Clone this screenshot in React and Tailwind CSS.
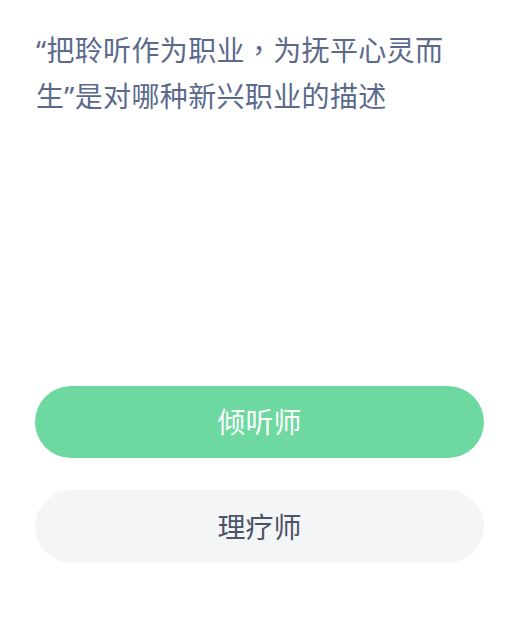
export default function App() {
  return (
    <div
      className="w-[524px] h-[618px] bg-white overflow-hidden"
      style={{ fontFamily: '"Noto Sans", "Noto Sans CJK SC", sans-serif' }}
    >
      {/* Question */}
      <p className="pt-[26px] pl-9 w-[462px] text-[28px] tracking-[0.35px] leading-[46px] text-[#5b6a8c]">
        “把聆听作为职业
        <span style={{ fontFamily: '"Noto Sans CJK TC", sans-serif' }}>，</span>
        为抚平心灵而生”是对哪种新兴职业的描述
      </p>

      {/* Options */}
      <div className="mt-[267px] ml-[35px] w-[449px] flex flex-col gap-8">
        <button className="h-[72px] rounded-full bg-[#6dd89f] text-white text-[28px]">
          倾听师
        </button>
        <button className="h-[73px] rounded-full bg-[#f4f5f7] text-[#4b5466] text-[28px]">
          理疗师
        </button>
      </div>
    </div>
  );
}
